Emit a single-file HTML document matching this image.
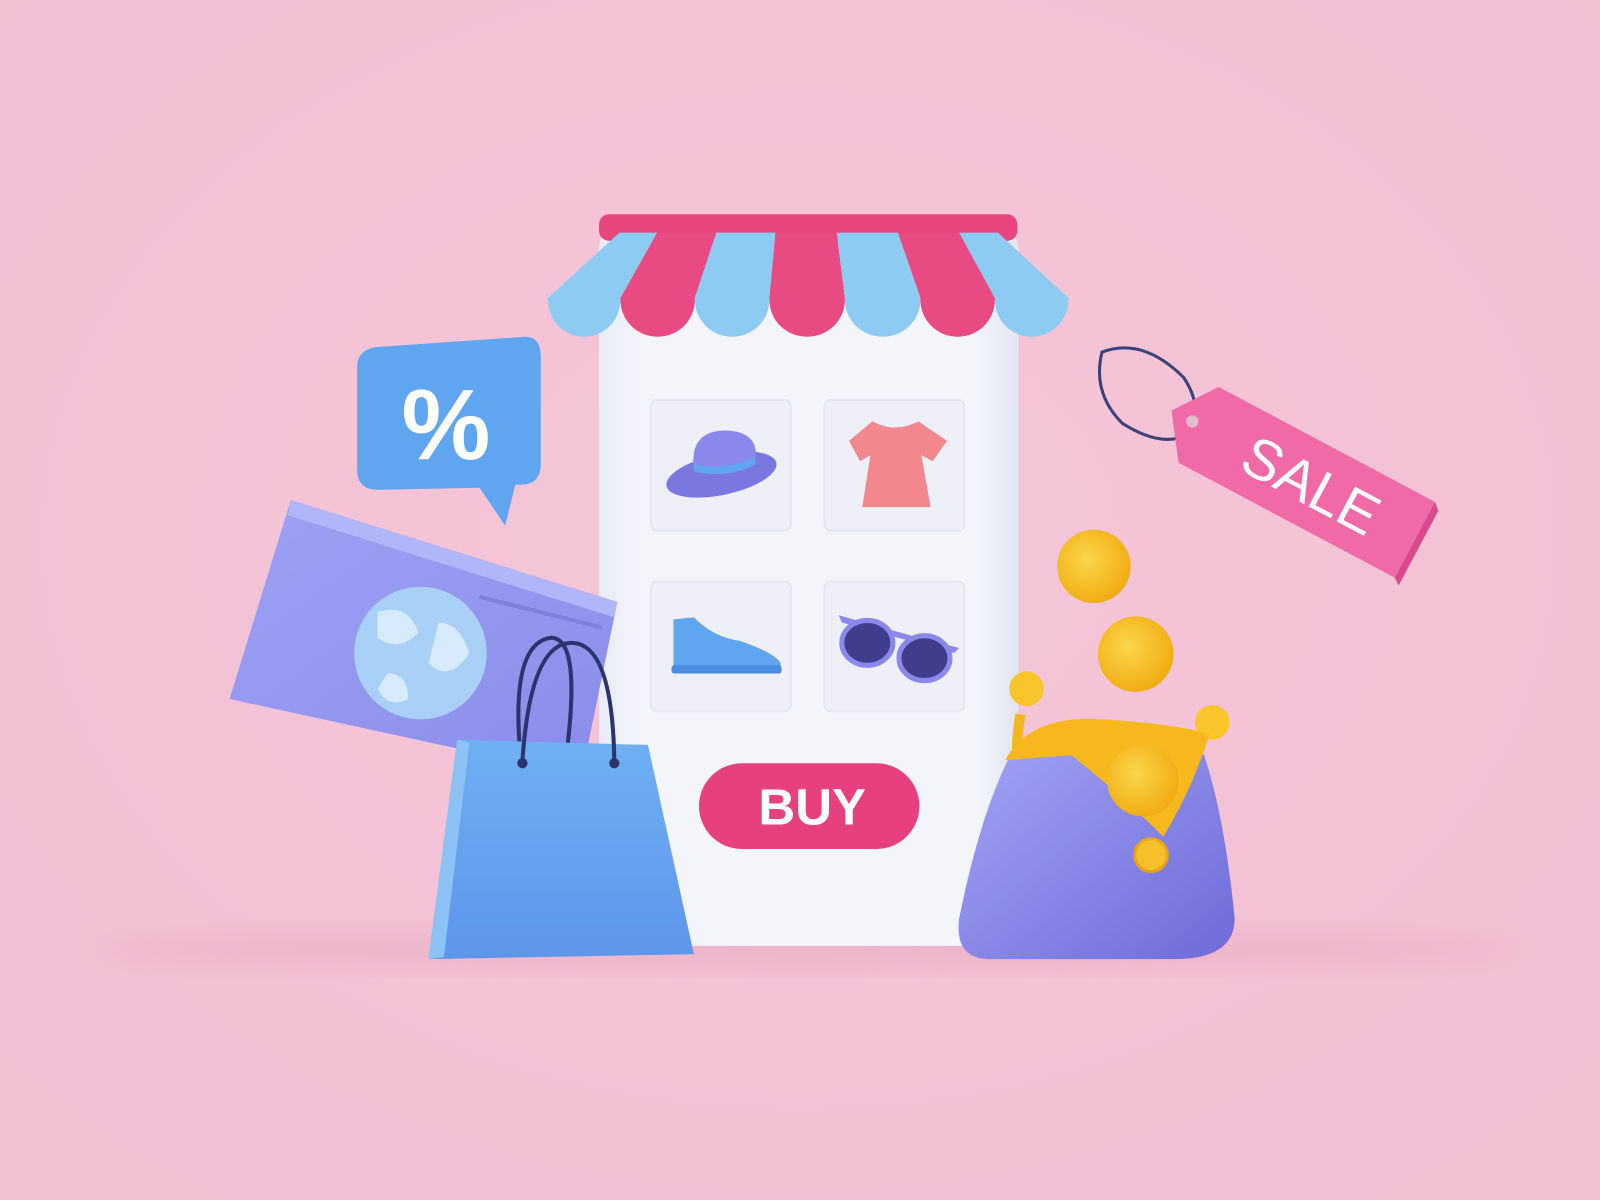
<!DOCTYPE html>
<html><head><meta charset="utf-8"><style>
html,body{margin:0;padding:0;background:#f4c4d6;width:1600px;height:1200px;overflow:hidden}
svg{display:block}
</style></head><body>
<svg width="1600" height="1200" viewBox="0 0 1568 1176" preserveAspectRatio="none" xmlns="http://www.w3.org/2000/svg">
<defs>
<radialGradient id="bg" cx="50%" cy="45%" r="70%"><stop offset="0" stop-color="#f5c6d8"/><stop offset="1" stop-color="#f2bfd3"/></radialGradient>
<linearGradient id="phone" x1="0" x2="1"><stop offset="0" stop-color="#e9ebf6"/><stop offset="0.1" stop-color="#f4f5fb"/><stop offset="0.9" stop-color="#f4f5fb"/><stop offset="1" stop-color="#e3e5f2"/></linearGradient>
<linearGradient id="bag" x1="0" y1="0" x2="0" y2="1"><stop offset="0" stop-color="#6fb0f2"/><stop offset="1" stop-color="#5d95ea"/></linearGradient>
<linearGradient id="card" x1="0" y1="0" x2="1" y2="1"><stop offset="0" stop-color="#9da2f5"/><stop offset="1" stop-color="#8a8ce8"/></linearGradient>
<linearGradient id="wal" x1="0" y1="0" x2="1" y2="1"><stop offset="0" stop-color="#a4a6f6"/><stop offset="1" stop-color="#6e6ad8"/></linearGradient>
<radialGradient id="coin" cx="40%" cy="40%" r="60%"><stop offset="0" stop-color="#fbd54a"/><stop offset="1" stop-color="#f1ad14"/></radialGradient>
<filter id="sh" x="-30%" y="-30%" width="160%" height="160%"><feGaussianBlur stdDeviation="14"/></filter>
</defs>
<rect width="1568" height="1176" fill="url(#bg)"/>
<ellipse cx="790" cy="930" rx="700" ry="18" fill="#e6a8c0" opacity="0.6" filter="url(#sh)"/>
<!-- sale tag -->
<path d="M1080 345 Q1120 330 1160 370 Q1180 400 1165 425 Q1140 440 1100 415 Q1070 385 1080 345Z" fill="none" stroke="#39427a" stroke-width="3"/>
<g transform="translate(1285,475) rotate(28)">
<path d="M-125 -42 L115 -42 L115 42 L-125 42 L-155 0 Z" fill="#f06aa8"/>
<path d="M115 -42 L122 -36 L122 47 L115 42Z" fill="#d94a8c"/>
<circle cx="-132" cy="0" r="6" fill="#e0bbd0"/>
<text x="0" y="20" font-family="Liberation Sans,sans-serif" font-size="56" fill="#fff" text-anchor="middle">SALE</text>
</g>
<!-- percent bubble -->
<path d="M370 340 L515 330 Q530 330 530 350 L530 455 Q530 475 510 475 L505 475 L495 515 L470 478 L370 480 Q350 480 350 460 L350 360 Q350 342 370 340Z" fill="#5fa5ef"/>
<text x="437" y="450" font-family="Liberation Sans,sans-serif" font-weight="bold" font-size="98" fill="#fff" text-anchor="middle">%</text>
<!-- phone -->
<rect x="587" y="215" width="411" height="712" rx="30" fill="url(#phone)"/>
<!-- card (in front of phone) -->
<polygon points="285,490 605,590 570,760 225,685" fill="url(#card)"/>
<polygon points="285,490 605,590 602,605 282,505" fill="#b1b6fa"/>
<line x1="470" y1="585" x2="590" y2="615" stroke="#7e80da" stroke-width="4"/>
<circle cx="412" cy="640" r="65" fill="#a9d0f7"/>
<path d="M370 600 q30 -10 40 20 q-20 20 -40 5z M430 610 q20 0 30 30 q-20 30 -40 10z M380 660 q20 0 20 25 q-20 10 -30 -10z" fill="#d7ebfc"/>
<!-- awning -->
<rect x="587" y="210" width="410" height="26" rx="10" fill="#e8457f"/>
<g>
<polygon points="607,228 644,228 608,292 537,292" fill="#8ecbf2"/>
<polygon points="644,228 702,228 681,292 608,292" fill="#e84a82"/>
<polygon points="702,228 760,228 754,292 681,292" fill="#8ecbf2"/>
<polygon points="760,228 820,228 828,292 754,292" fill="#e84a82"/>
<polygon points="820,228 880,228 902,292 828,292" fill="#8ecbf2"/>
<polygon points="880,228 940,228 975,292 902,292" fill="#e84a82"/>
<polygon points="940,228 978,228 1047,292 975,292" fill="#8ecbf2"/>
<path d="M537 292 h71 v2 a35.5 36 0 0 1 -71 0z" fill="#8ecbf2"/>
<path d="M608 292 h73 v2 a36.5 36 0 0 1 -73 0z" fill="#e84a82"/>
<path d="M681 292 h73 v2 a36.5 36 0 0 1 -73 0z" fill="#8ecbf2"/>
<path d="M754 292 h74 v2 a37 36 0 0 1 -74 0z" fill="#e84a82"/>
<path d="M828 292 h74 v2 a37 36 0 0 1 -74 0z" fill="#8ecbf2"/>
<path d="M902 292 h73 v2 a36.5 36 0 0 1 -73 0z" fill="#e84a82"/>
<path d="M975 292 h72 v2 a36 36 0 0 1 -72 0z" fill="#8ecbf2"/>
</g>
<!-- tiles -->
<g fill="#eff0f7" stroke="#e4e6f0" stroke-width="2">
<rect x="638" y="392" width="137" height="128" rx="6"/>
<rect x="808" y="392" width="137" height="128" rx="6"/>
<rect x="638" y="570" width="137" height="127" rx="6"/>
<rect x="808" y="570" width="137" height="127" rx="6"/>
</g>
<!-- hat -->
<ellipse cx="707" cy="465" rx="55" ry="20" fill="#7a78e0" transform="rotate(-12 707 465)"/>
<path d="M680 460 Q675 420 715 422 Q745 425 740 452 Q710 465 680 460Z" fill="#8a88ea"/>
<path d="M680 455 Q710 462 740 448 L741 455 Q710 470 681 462Z" fill="#5fa5ef"/>
<!-- shirt -->
<path d="M855 413 Q877 425 900 413 L928 432 L914 452 L903 446 L912 497 L845 497 L853 446 L843 452 L832 432Z" fill="#f3878e"/>
<!-- shoe -->
<path d="M660 607 L680 605 Q700 625 725 628 Q760 640 765 650 L765 660 L660 660Z" fill="#5fa5ef"/>
<rect x="658" y="652" width="108" height="8" rx="3" fill="#4a8de0"/>
<!-- glasses -->
<path d="M822 603 Q880 620 940 635 L935 640 Q880 625 825 610Z" fill="#8a88ea"/>
<ellipse cx="850" cy="630" rx="25" ry="22" fill="#3f3d8c" stroke="#8a88ea" stroke-width="5"/>
<ellipse cx="906" cy="645" rx="25" ry="22" fill="#3f3d8c" stroke="#8a88ea" stroke-width="5"/>
<!-- buy -->
<rect x="685" y="748" width="216" height="84" rx="42" fill="#e6407e"/>
<text x="796" y="808" font-family="Liberation Sans,sans-serif" font-weight="bold" font-size="50" fill="#fff" text-anchor="middle">BUY</text>
<!-- bag -->
<path d="M510 740 Q500 630 540 625 Q570 625 555 740" fill="none" stroke="#2c3470" stroke-width="4"/>
<path d="M448 725 L635 730 L680 935 L420 940Z" fill="url(#bag)"/>
<path d="M448 725 L460 728 L435 938 L420 940Z" fill="#8cc2f5"/>
<path d="M512 745 Q520 630 560 630 Q600 630 602 745" fill="none" stroke="#2c3470" stroke-width="4"/>
<circle cx="512" cy="748" r="5" fill="#2c3470"/><circle cx="602" cy="748" r="5" fill="#2c3470"/>
<!-- coins -->
<circle cx="1072" cy="555" r="36" fill="url(#coin)"/>
<circle cx="1113" cy="641" r="37" fill="url(#coin)"/>
<!-- wallet -->
<path d="M1000 700 Q990 760 1010 770" fill="none" stroke="#f3b81c" stroke-width="10"/>
<circle cx="1006" cy="675" r="17" fill="#f8c52a"/>
<circle cx="1188" cy="708" r="17" fill="#f8c52a"/>
<path d="M990 740 Q1020 715 1080 712 Q1150 712 1180 740 Q1200 800 1210 900 Q1210 940 1150 940 L970 940 Q935 940 940 900 Q960 800 990 740Z" fill="url(#wal)"/>
<path d="M985 745 Q1010 700 1080 705 Q1160 710 1185 720 Q1170 770 1140 820 Q1100 780 1050 740Z" fill="#f6b81d"/>
<circle cx="1120" cy="765" r="35" fill="url(#coin)"/>
<circle cx="1128" cy="838" r="16" fill="#f6c02a" stroke="#e9a414" stroke-width="3"/>
</svg>
</body></html>
